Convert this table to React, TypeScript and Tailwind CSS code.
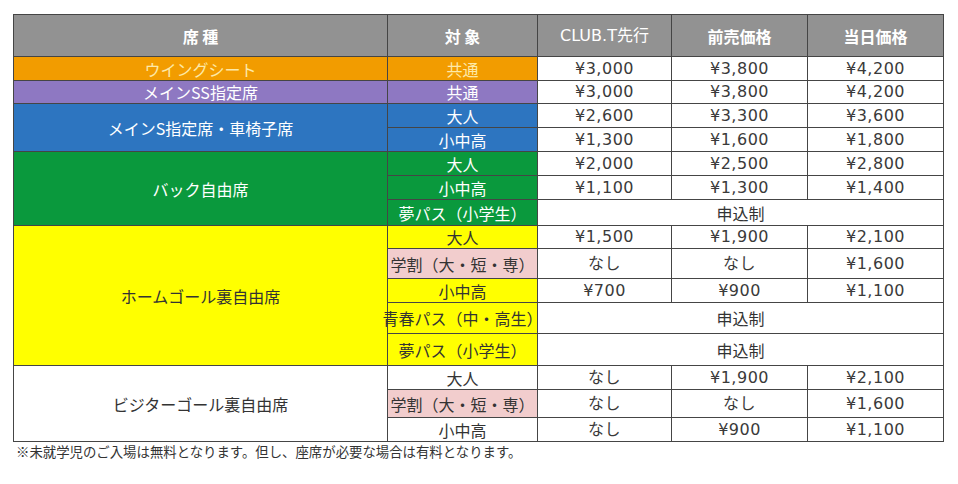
import React from 'react'

const font = { fontFamily: '"Noto Sans CJK JP", "Liberation Sans", sans-serif' }

const C: React.FC<{ className?: string; children?: React.ReactNode }> = ({ className = '', children }) => (
    <div className={`flex items-center justify-center bg-white text-[#333] leading-none whitespace-nowrap ${className}`}>
        {children}
    </div>
)

// prices use wider latin digits, like the original sheet
const P: React.FC<{ children?: React.ReactNode }> = ({ children }) => (
    <C className="font-['DejaVu_Sans','Noto_Sans_CJK_JP',sans-serif] tracking-[0.5px] !text-[#3a3a3a]">{children}</C>
)

const prices = (a: string, b: string, c: string) => [a, b, c].map((p, i) => <P key={i}>{p}</P>)

const App: React.FC = () => {
    return (
        <div className="w-[958px] h-[484px] bg-white pt-[14px] pl-[13px]" style={font}>
            <div
                className="grid w-[931px] bg-[#454545] border border-[#454545] gap-px text-[16px]
                grid-cols-[373px_149px_133px_135px_135px]
                grid-rows-[41px_23px_22px_23px_23px_23px_23px_25px_22px_29px_23px_30px_31px_23px_27px_23px]"
            >
                {/* header */}
                <C className="!bg-[#929292] !text-white font-bold">席 種</C>
                <C className="!bg-[#929292] !text-white font-bold">対 象</C>
                <C className="!bg-[#929292] !text-white font-['DejaVu_Sans','Noto_Sans_CJK_JP',sans-serif]">CLUB.T先行</C>
                <C className="!bg-[#929292] !text-white font-bold">前売価格</C>
                <C className="!bg-[#929292] !text-white font-bold">当日価格</C>

                <C className="!bg-[#f29c00] !text-[#fde9a8]">ウイングシート</C>
                <C className="!bg-[#f29c00] !text-[#fde9a8]">共通</C>
                {prices('¥3,000', '¥3,800', '¥4,200')}

                <C className="!bg-[#8e78c2] !text-white">メインSS指定席</C>
                <C className="!bg-[#8e78c2] !text-white">共通</C>
                {prices('¥3,000', '¥3,800', '¥4,200')}

                <C className="row-span-2 !bg-[#2d75c0] !text-white">メインS指定席・車椅子席</C>
                <C className="!bg-[#2d75c0] !text-white">大人</C>
                {prices('¥2,600', '¥3,300', '¥3,600')}
                <C className="!bg-[#2d75c0] !text-white">小中高</C>
                {prices('¥1,300', '¥1,600', '¥1,800')}

                <C className="row-span-3 !bg-[#0a993d] !text-white">バック自由席</C>
                <C className="!bg-[#0a993d] !text-white">大人</C>
                {prices('¥2,000', '¥2,500', '¥2,800')}
                <C className="!bg-[#0a993d] !text-white">小中高</C>
                {prices('¥1,100', '¥1,300', '¥1,400')}
                <C className="!bg-[#0a993d] !text-white">夢パス（小学生）</C>
                <C className="col-span-3">申込制</C>

                <C className="row-span-5 !bg-[#ffff00]">ホームゴール裏自由席</C>
                <C className="!bg-[#ffff00]">大人</C>
                {prices('¥1,500', '¥1,900', '¥2,100')}
                <C className="!bg-[#f2cdcd]">学割（大・短・専）</C>
                {prices('なし', 'なし', '¥1,600')}
                <C className="!bg-[#ffff00]">小中高</C>
                {prices('¥700', '¥900', '¥1,100')}
                <C className="!bg-[#ffff00]">青春パス（中・高生）</C>
                <C className="col-span-3">申込制</C>
                <C className="!bg-[#ffff00]">夢パス（小学生）</C>
                <C className="col-span-3">申込制</C>

                <C className="row-span-3">ビジターゴール裏自由席</C>
                <C>大人</C>
                {prices('なし', '¥1,900', '¥2,100')}
                <C className="!bg-[#f2cdcd]">学割（大・短・専）</C>
                {prices('なし', 'なし', '¥1,600')}
                <C>小中高</C>
                {prices('なし', '¥900', '¥1,100')}
            </div>
            <p className="mt-[3px] ml-[3px] text-[13.4px] text-[#333] leading-none">
                ※未就学児のご入場は無料となります。但し、座席が必要な場合は有料となります。
            </p>
        </div>
    )
}

export default App
